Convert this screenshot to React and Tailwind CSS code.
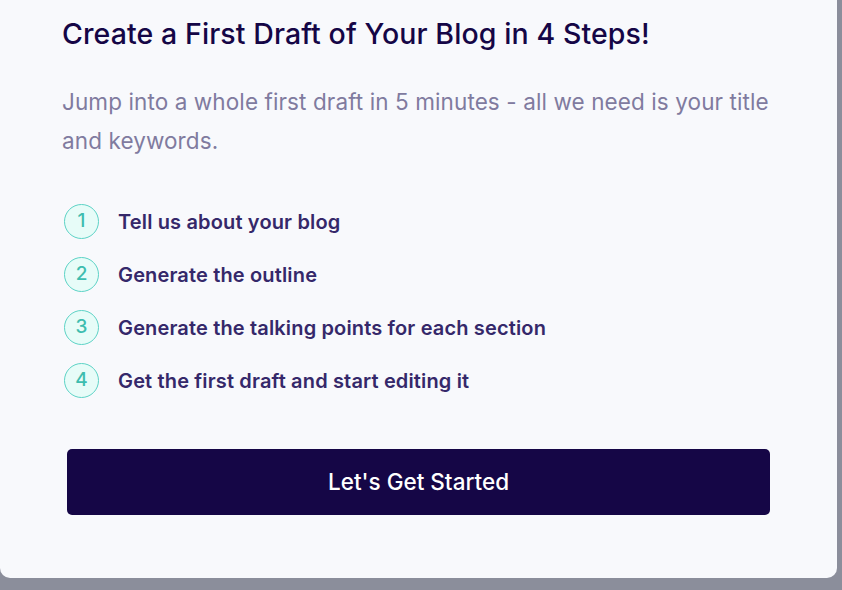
import React from "react";

const steps = [
  "Tell us about your blog",
  "Generate the outline",
  "Generate the talking points for each section",
  "Get the first draft and start editing it",
];

export default function App() {
  return (
    <div className="w-[842px] h-[590px] bg-[#8b8e9b] overflow-hidden" style={{ fontFamily: "Inter, 'Noto Sans', sans-serif" }}>
      <div className="w-[837px] h-[578px] bg-[#f8f9fc] rounded-b-[10px] pl-[62px] pr-[60px] pt-[16px] flex flex-col">
        <h1 className="text-[28.5px] leading-[36px] font-medium text-[#150646] tracking-[0.1px]">
          Create a First Draft of Your Blog in 4 Steps!
        </h1>
        <p className="mt-[30px] text-[22.5px] leading-[39px] text-[#807b9f] tracking-[0.1px]">
          Jump into a whole first draft in 5 minutes - all we need is your title and keywords.
        </p>
        <div className="mt-[44px] flex flex-col gap-[18px] pl-[2px]">
          {steps.map((s, i) => (
            <div key={i} className="flex items-center h-[35px]">
              <div className="w-[35px] h-[35px] rounded-full border border-[#5dd3c6] bg-[#e7fcf8] flex items-center justify-center text-[19px] font-medium text-[#3dbdaf]">
                {i + 1}
              </div>
              <span className="ml-[19px] text-[20px] font-semibold text-[#35286a] tracking-[0.15px]">{s}</span>
            </div>
          ))}
        </div>
        <button className="mt-[51px] ml-[5px] w-[703px] h-[66px] rounded-[5px] bg-[#150646] text-white text-[22.5px] font-medium">
          Let's Get Started
        </button>
      </div>
    </div>
  );
}
